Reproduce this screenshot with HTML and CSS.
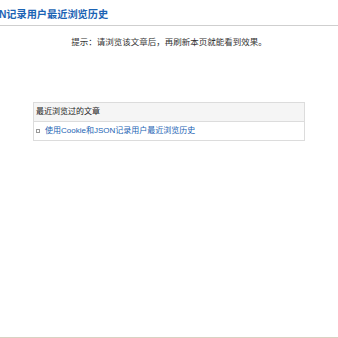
FILE: index.html
```html
<!DOCTYPE html>
<html lang="zh-CN">
<head>
    <meta charset="UTF-8">
    <meta name="viewport" content="width=device-width, initial-scale=1.0">
    <title>使用Cookie和JSON记录用户最近浏览历史</title>
    <link rel="stylesheet" href="styles.css">
</head>
<body>
<div class="page">
    <div class="header">
        <h1 class="title">使用Cookie和JSON记录用户最近浏览历史</h1>
    </div>
    <p class="tip">提示：请浏览该文章后，再刷新本页就能看到效果。</p>
    <div class="history">
        <div class="history-head">最近浏览过的文章</div>
        <ul class="history-list">
            <li><a href="#">使用Cookie和JSON记录用户最近浏览历史</a></li>
        </ul>
    </div>
    <div class="footer"></div>
</div>
</body>
</html>
```

FILE: styles.css
```css
body {
    margin: 0;
    padding: 0;
    font-family: "Liberation Sans", "Noto Sans CJK SC", sans-serif;
    background-color: #fff;
    overflow: hidden;
}

.page {
    height: 338px;
    display: flex;
    flex-direction: column;
}

.header {
    height: 25px;
    border-bottom: 1px solid #cfcfcf;
    overflow: hidden;
}

.title {
    margin: 0 0 0 -86px;
    padding-top: 9px;
    font-size: 10.2px;
    line-height: 12px;
    font-weight: bold;
    color: #1b63b4;
    white-space: nowrap;
}

.tip {
    margin: 11px 0 0;
    text-align: center;
    font-size: 8.5px;
    line-height: 10px;
    color: #333;
}

.history {
    width: 270px;
    margin: 55px auto 0;
    border: 1px solid #dcdcdc;
    font-size: 8px;
}

.history-head {
    height: 18px;
    line-height: 18px;
    padding-left: 2px;
    background-color: #f5f5f5;
    border-bottom: 1px solid #dcdcdc;
    color: #222;
}

.history-list {
    list-style: none;
    margin: 0;
    padding: 0;
}

.history-list li {
    height: 18px;
    line-height: 18px;
    padding-left: 11px;
    position: relative;
}

.history-list li::before {
    content: "";
    position: absolute;
    left: 2px;
    top: 7px;
    width: 2px;
    height: 2px;
    border: 1px solid #999;
}

.history-list a {
    color: #1b63b4;
    text-decoration: none;
}

.footer {
    margin-top: auto;
    height: 0;
    border-top: 1px solid #d8d2c2;
}
```
